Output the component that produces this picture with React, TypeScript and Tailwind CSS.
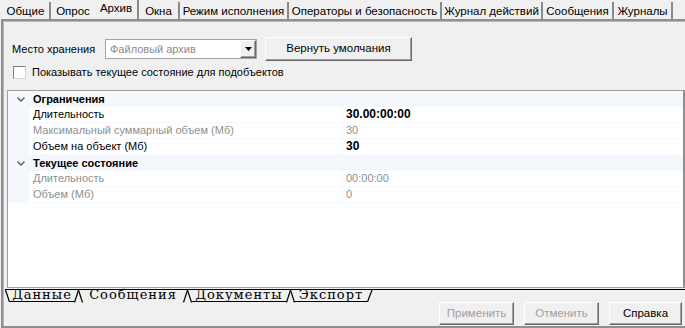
import React from 'react'

const tabs = [
  { label: 'Общие', w: 'w-[49px]' },
  { label: 'Опрос', w: 'w-[44px]', noEdge: true },
  { label: 'Архив', w: 'w-[44px]', active: true },
  { label: 'Окна', w: 'w-[41px]' },
  { label: 'Режим исполнения', w: 'w-[109px]' },
  { label: 'Операторы и безопасность', w: 'w-[153px]' },
  { label: 'Журнал действий', w: 'w-[101px]' },
  { label: 'Сообщения', w: 'w-[71px]' },
  { label: 'Журналы', w: 'w-[59px]' },
]

type Row =
  | { kind: 'cat'; name: string }
  | { kind: 'prop'; name: string; value: string; dim?: boolean; bold?: boolean }

const rows: Row[] = [
  { kind: 'cat', name: 'Ограничения' },
  { kind: 'prop', name: 'Длительность', value: '30.00:00:00', bold: true },
  { kind: 'prop', name: 'Максимальный суммарный объем (Мб)', value: '30', dim: true },
  { kind: 'prop', name: 'Объем на объект (Мб)', value: '30', bold: true },
  { kind: 'cat', name: 'Текущее состояние' },
  { kind: 'prop', name: 'Длительность', value: '00:00:00', dim: true },
  { kind: 'prop', name: 'Объем (Мб)', value: '0', dim: true },
]

function Chevron() {
  return (
    <svg width="8" height="5" viewBox="0 0 8 5" className="block">
      <polyline points="0.5,0.5 4,4 7.5,0.5" fill="none" stroke="#5a5a5a" strokeWidth="1.3" />
    </svg>
  )
}

function Lambda() {
  return (
    <svg width="9" height="13" viewBox="0 0 9 13" className="block shrink-0">
      <line x1="0.5" y1="12.5" x2="4.5" y2="0" stroke="#000" strokeWidth="1.2" />
      <line x1="4.5" y1="0" x2="8.5" y2="12.5" stroke="#000" strokeWidth="1.2" />
    </svg>
  )
}

function Button({ label, disabled, className }: { label: string; disabled?: boolean; className: string }) {
  return (
    <div
      className={`flex items-center justify-center border border-t-white border-l-white border-r-[#696969] border-b-[#696969] bg-[#f0f0f0] shadow-[inset_-1px_-1px_0_#a0a0a0] text-[11.5px] ${
        disabled ? 'text-[#a0a0a0]' : 'text-black'
      } ${className}`}
    >
      {label}
    </div>
  )
}

export default function App() {
  return (
    <div className="w-[685px] h-[328px] overflow-hidden bg-[#f0f0f0] font-['Liberation_Sans',Arial,sans-serif] text-black flex flex-col">
      {/* top tabs */}
      <div className="h-[19px] flex items-end pl-[2px] shrink-0">
        {tabs.map((t) => (
          <div
            key={t.label}
            className={`${t.w} shrink-0 flex justify-center whitespace-nowrap text-[11.5px] leading-[14px] ${
              t.active ? 'h-[19px] pt-[1px] border-r-2 border-r-[#8a8a8a]' : 'h-[17px] pt-[2px]'
            } ${!t.active && !t.noEdge ? 'border-r-2 border-r-[#8a8a8a]' : ''}`}
          >
            {t.label}
          </div>
        ))}
      </div>

      {/* panel */}
      <div className="ml-[1px] w-[690px] flex-1 flex flex-col border-t-2 border-l-2 border-b-2 border-[#8f8f8f] shadow-[inset_1px_1px_0_#b8b8b8]">
        <div className="mt-[16px] h-[24px] flex items-center pl-[9px]">
          <div className="w-[93px] text-[11px]">Место хранения</div>
          <div className="w-[152px] h-[20px] border border-[#a5a5a5] bg-white flex items-center">
            <div className="flex-1 pl-[4px] text-[11px] text-[#8c8c8c]">Файловый архив</div>
            <div className="w-[16px] h-[18px] flex items-center justify-center border border-t-white border-l-white border-r-[#696969] border-b-[#696969] bg-[#f0f0f0] shadow-[inset_-1px_-1px_0_#a0a0a0]">
              <svg width="7" height="4" viewBox="0 0 7 4" className="block">
                <polygon points="0,0 7,0 3.5,4" fill="#000" />
              </svg>
            </div>
          </div>
          <Button label="Вернуть умолчания" className="ml-[8px] w-[147px] h-[24px]" />
        </div>

        <div className="mt-[5px] h-[13px] flex items-center pl-[10px]">
          <div className="w-[13px] h-[13px] bg-white border border-t-[#808080] border-l-[#808080] border-r-[#d4d4d4] border-b-[#d4d4d4]" />
          <div className="ml-[6px] text-[11px]">Показывать текущее состояние для подобъектов</div>
        </div>

        {/* property grid */}
        <div className="mt-[11px] ml-[4px] w-[678px] h-[198px] shrink-0 border border-[#a0a0a0] border-r-2 border-r-[#8f8f8f] bg-white flex flex-col">
          {rows.map((r, i) =>
            r.kind === 'cat' ? (
              <div key={i} className="h-[16px] flex items-center bg-[#f4f7fc] text-[11px] font-bold">
                <div className="w-[25px] flex justify-center pl-[1px]">
                  <Chevron />
                </div>
                <div>{r.name}</div>
              </div>
            ) : (
              <div key={i} className="h-[16px] flex bg-[#f4f7fc] text-[11px]">
                <div className="w-[21px]" />
                <div
                  className={`w-[313px] h-[15px] bg-white pl-[4px] leading-[15px] ${r.dim ? 'text-[#8f8f8f]' : ''}`}
                >
                  {r.name}
                </div>
                <div
                  className={`ml-[1px] flex-1 h-[15px] bg-white pl-[3px] leading-[15px] ${
                    r.dim ? 'text-[#8f8f8f]' : ''
                  } ${r.bold ? 'font-bold text-[12px]' : ''}`}
                >
                  {r.value}
                </div>
              </div>
            )
          )}
        </div>

        {/* bottom sheet tabs */}
        <div className="mt-[1px] ml-[2px] h-[13px] border-t border-black flex font-['DejaVu_Serif',serif] text-[13px] tracking-[1px] leading-[10px]">
          <svg width="5" height="12" viewBox="0 0 5 12" className="block shrink-0">
            <line x1="0.5" y1="0" x2="4.5" y2="12" stroke="#000" strokeWidth="1.2" />
          </svg>
          <div className="w-[64px] h-[12px] border-b border-black flex justify-center">Данные</div>
          <Lambda />
          <div className="w-[100px] h-[12px] flex justify-center">Сообщения</div>
          <Lambda />
          <div className="w-[94px] h-[12px] border-b border-black flex justify-center">Документы</div>
          <Lambda />
          <div className="w-[72px] h-[12px] border-b border-black flex justify-center">Экспорт</div>
          <svg width="7" height="12" viewBox="0 0 7 12" className="block shrink-0">
            <line x1="0.5" y1="12" x2="5" y2="0" stroke="#000" strokeWidth="1.2" />
          </svg>
        </div>

        <div className="h-[23px] flex pl-[436px] gap-[10px]">
          <Button label="Применить" disabled className="w-[75px] h-[23px]" />
          <Button label="Отменить" disabled className="w-[75px] h-[23px]" />
          <Button label="Справка" className="w-[73px] h-[23px]" />
        </div>
      </div>
    </div>
  )
}
